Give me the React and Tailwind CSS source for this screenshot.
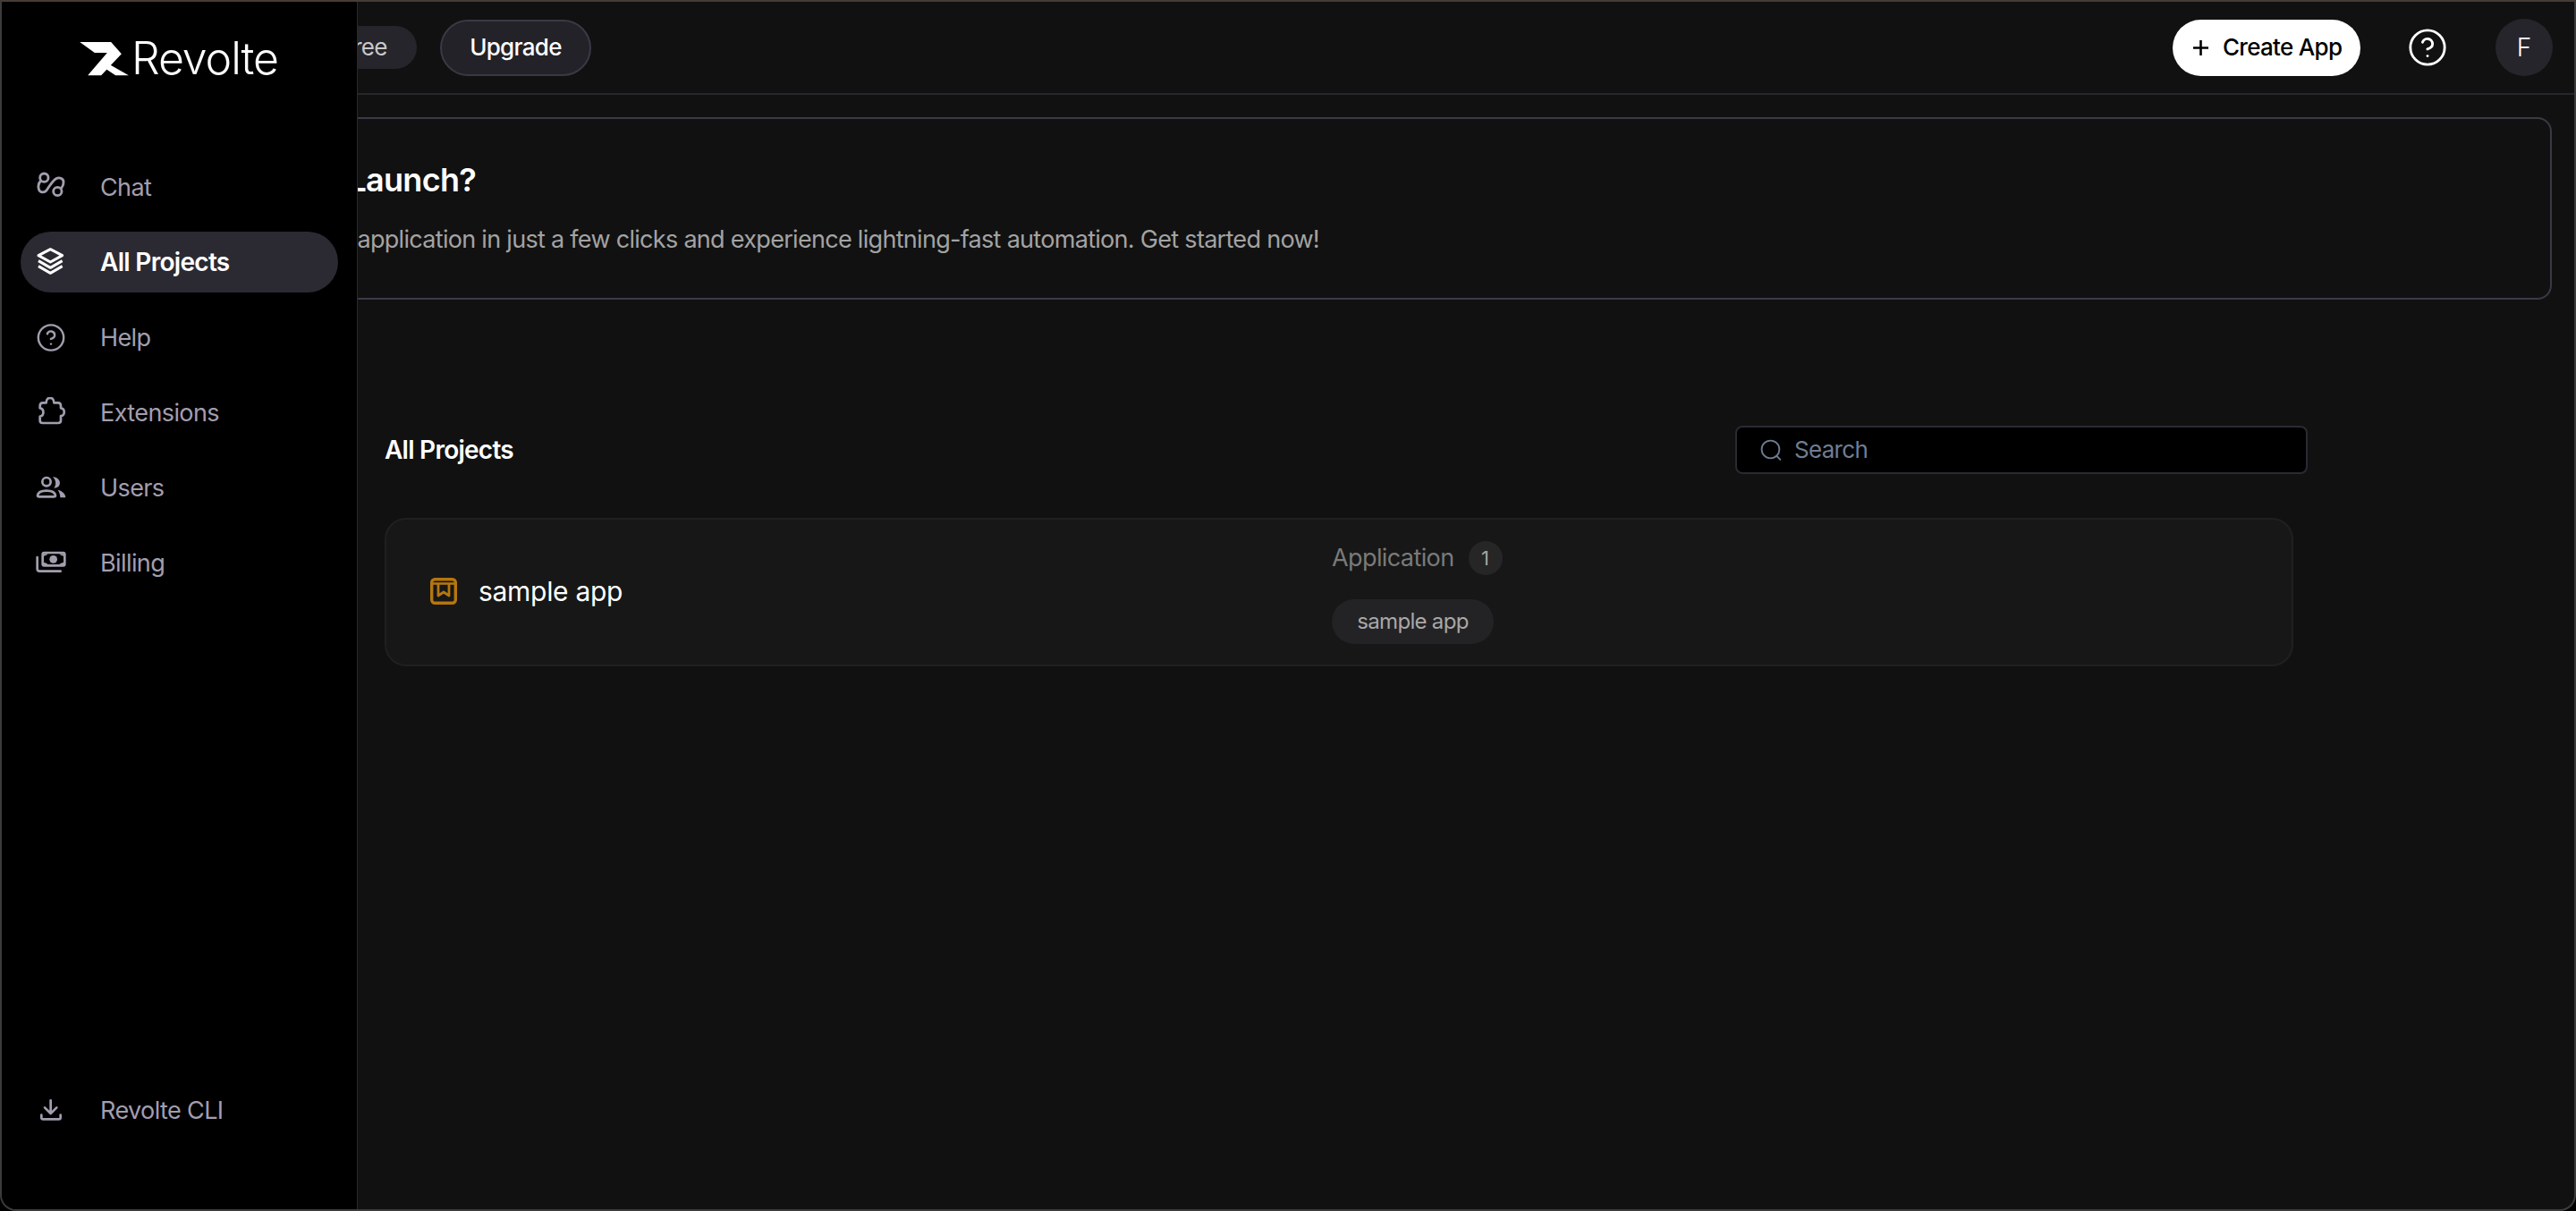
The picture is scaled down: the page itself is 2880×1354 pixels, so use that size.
import React from "react";
import { CircleHelp } from "lucide-react";

function ChatIcon() {
  return (
    <svg viewBox="120 72 100 100" className="w-[33.33px] h-[33.33px]" fill="none" stroke="currentColor" strokeWidth="8.5" strokeLinecap="round">
      <circle cx="148" cy="92" r="14" />
      <path d="M137 102C130 110 127 120 130 130C134 144 150 144 158 132C166 120 176 102 188 95C200 89 214 95 213 108C213 114 211 120 207 125" />
      <circle cx="193" cy="138" r="14" />
    </svg>
  );
}

function LayersIcon() {
  return (
    <svg viewBox="31 49 100 100" className="w-[33.33px] h-[33.33px]" fill="none" stroke="currentColor" strokeWidth="9" strokeLinejoin="round">
      <path d="M40 78L80 57L120 78L80 100Z" />
      <path d="M40 96L80 119L120 96" />
      <path d="M40 114L80 137L120 114" />
    </svg>
  );
}

function HelpIcon() {
  return <CircleHelp size={35} strokeWidth={1.7} />;
}

function PuzzleIcon() {
  return (
    <svg viewBox="31 43 100 100" className="w-[33.33px] h-[33.33px]" fill="none" stroke="currentColor" strokeWidth="8" strokeLinejoin="round">
      <path d="M45 72Q45 62 55 62H66C66 40 92 40 92 62H106Q115 62 115 72V80C130 80 130 106 115 106V122Q115 130 106 130H54Q45 130 45 122V108C60 106 60 82 45 80Z" />
    </svg>
  );
}

function UsersIcon() {
  return (
    <svg viewBox="31 25 100 100" className="w-[33.33px] h-[33.33px]" fill="none" stroke="currentColor" strokeWidth="8">
      <circle cx="67" cy="57" r="14" />
      <path d="M37 103Q40 87 67 87Q94 87 97 103Q97 107 91 107H43Q37 107 37 103Z" />
      <path d="M88 41C108 41 118 60 108 72C104 76 98 78 92 78C100 68 100 52 88 41Z" fill="currentColor" stroke="none" />
      <path d="M105 84C120 87 131 98 131 110H113C113 100 110 92 105 84Z" fill="currentColor" stroke="none" />
    </svg>
  );
}

function BillingIcon() {
  return (
    <svg viewBox="31 277 100 100" className="w-[33.33px] h-[33.33px]" fill="none" stroke="currentColor" strokeWidth="8" strokeLinecap="round">
      <rect x="54" y="295" width="74" height="43" rx="5" />
      <path d="M56 299H72Q68 304 58 306ZM126 299H110Q114 304 124 306ZM56 334H72Q68 329 58 327ZM126 334H110Q114 329 124 327Z" fill="currentColor" stroke="none" />
      <circle cx="90" cy="317" r="13" fill="currentColor" stroke="none" />
      <path d="M36 310V349Q36 357 44 357H114" />
    </svg>
  );
}

function DownloadIcon() {
  return (
    <svg viewBox="121 133 100 100" className="w-[33.33px] h-[33.33px]" fill="none" stroke="currentColor" strokeWidth="8" strokeLinecap="round" strokeLinejoin="round">
      <path d="M171 152V195M151 176L171 196L191 176" />
      <path d="M140 201V210Q140 215 146 215H198Q204 215 204 210V201" />
    </svg>
  );
}

function NavItem({ icon, label, active }) {
  return (
    <div
      className={
        active
          ? "flex items-center h-[68px] rounded-full bg-[#2b2a33] pl-[17px] gap-[38px] text-white text-[28px] tracking-[-0.7px] font-semibold"
          : "flex items-center h-[68px] rounded-full pl-[17px] gap-[38px] text-[#a29eaf] text-[27px] tracking-[-0.6px] font-normal"
      }
    >
      <span className="flex items-center justify-center w-[34px] h-[34px]">{icon}</span>
      <span className="leading-none">{label}</span>
    </div>
  );
}

function Sidebar() {
  return (
    <aside className="absolute left-0 top-0 bottom-0 w-[398px] bg-black border-r border-[#2a2a2a] flex flex-col pb-[77px]">
      {/* Logo */}
      <div className="flex items-center pl-[86px] pt-[44px] gap-[3px] text-white">
        <svg viewBox="55 45 167 117" className="w-[56px] h-[39px]" fill="currentColor">
          <path d="M58 48H163L198 88L130 160H85L150 84H108Z" />
          <path d="M156 122L222 160H178L144 137Z" />
        </svg>
        <span className="text-[50px] leading-[39px] font-light tracking-[-1.1px]">Revolte</span>
      </div>

      <nav className="mt-[90px] px-[21px] flex flex-col gap-4">
        <NavItem icon={<ChatIcon />} label="Chat" />
        <NavItem icon={<LayersIcon />} label="All Projects" active />
        <NavItem icon={<HelpIcon />} label="Help" />
        <NavItem icon={<PuzzleIcon />} label="Extensions" />
        <NavItem icon={<UsersIcon />} label="Users" />
        <NavItem icon={<BillingIcon />} label="Billing" />
      </nav>

      <div className="mt-auto px-[21px]">
        <NavItem icon={<DownloadIcon />} label="Revolte CLI" />
      </div>
    </aside>
  );
}

function Header() {
  return (
    <header className="h-[104px] shrink-0 border-b-2 border-[#26262d] flex items-center justify-between pl-[336px] pr-6">
      <div className="flex items-center gap-[26px]">
        <span className="flex items-center justify-center w-[128px] h-[48px] rounded-full bg-[#26252c] pl-[10px] text-[26px] leading-none text-[#c9c9c9] tracking-[-0.7px]">
          Free
        </span>
        <button className="flex items-center justify-center w-[169px] h-[63px] rounded-full bg-[#232228] border-2 border-[#3a3944] text-white text-[26px] leading-none font-medium tracking-[-0.7px]">
          Upgrade
        </button>
      </div>

      <div className="flex items-center">
        <button className="flex items-center w-[210px] h-[63px] rounded-full bg-white text-black pl-[23px] gap-[16px] text-[26px] leading-none font-medium tracking-[-0.7px]">
          <svg viewBox="0 0 17 17" className="w-[17px] h-[17px]" fill="none" stroke="currentColor" strokeWidth="2.6">
            <path d="M8.5 0V17M0 8.5H17" />
          </svg>
          Create App
        </button>
        <span className="ml-[52px] text-white">
          <CircleHelp size={46} strokeWidth={1.5} />
        </span>
        <div className="ml-[53px] w-16 h-16 rounded-full bg-[#26252c] flex items-center justify-center text-white text-[28px] leading-none font-light">
          F
        </div>
      </div>
    </header>
  );
}

export default function App() {
  return (
    <div className="relative w-[2880px] h-[1354px] bg-black overflow-hidden font-['Inter',sans-serif]">
      <div className="relative h-full flex flex-col bg-[#111111] border-2 border-[#3c3c3c] border-t-[#473c35] rounded-b-[18px] overflow-hidden">
        <Header />

        {/* Launch banner */}
        <section className="mt-[25px] ml-[25px] mr-[25px] h-[204px] shrink-0 border-2 border-[#3a3a47] rounded-[16px] flex flex-col pl-[205px] pt-[48px]">
          <h2 className="text-[36px] leading-[40px] font-semibold text-white tracking-[-0.7px]">Ready to Launch?</h2>
          <p className="mt-[33px] ml-[8px] text-[27px] leading-[28px] text-[#a3a3a3] tracking-[-0.7px]">
            Launch your application in just a few clicks and experience lightning-fast automation. Get started now!
          </p>
        </section>

        {/* Projects */}
        <section className="mt-[141px] ml-[428px] w-[2150px]">
          <div className="flex items-center justify-between">
            <h3 className="text-[28px] leading-none font-semibold text-white tracking-[-0.75px]">All Projects</h3>
            <div className="flex items-center w-[640px] h-[54px] rounded-[8px] bg-black border-2 border-[#2a2a33] pl-[26px] gap-[13px]">
              <svg viewBox="0 0 24 24" className="w-[25px] h-[25px] text-[#6f7d92]" fill="none" stroke="currentColor" strokeWidth="1.8" strokeLinecap="round">
                <circle cx="11" cy="11" r="9.5" />
                <path d="M18 18.5L21.5 22" />
              </svg>
              <span className="text-[26px] leading-none text-[#6f7d92] tracking-[-0.7px]">Search</span>
            </div>
          </div>

          <div className="mt-[49px] w-[2134px] h-[166px] rounded-[24px] bg-[#171717] border-2 border-[#202020] flex items-center pl-[49px]">
            <div className="flex items-center gap-[24px] w-[1008px] -mt-[2px]">
              <svg viewBox="0 0 30 30" className="w-[30px] h-[30px] text-[#b5770d]" fill="none" stroke="currentColor" strokeWidth="3.4" strokeLinejoin="round">
                <rect x="1.7" y="1.7" width="26.6" height="26.6" rx="3.5" />
                <path d="M2 6.5H28" strokeWidth="2.6" />
                <path d="M9 7V20L15 16L21 20V7" strokeWidth="2.8" />
              </svg>
              <span className="text-[30px] leading-none text-white tracking-[-0.3px]">sample app</span>
            </div>
            <div className="flex flex-col items-start gap-[27px]">
              <div className="flex items-center gap-4">
                <span className="text-[27px] leading-none text-[#7a7a7a] tracking-[-0.6px]">Application</span>
                <span className="flex items-center justify-center w-[38px] h-[38px] rounded-full bg-[#262626] text-[22px] leading-none text-[#a3a3a3]">1</span>
              </div>
              <span className="flex items-center justify-center w-[181px] h-[50px] rounded-full bg-[#232325] text-[24px] leading-none text-[#a8a8a8] tracking-[-0.7px]">
                sample app
              </span>
            </div>
          </div>
        </section>

        <Sidebar />
      </div>
    </div>
  );
}
